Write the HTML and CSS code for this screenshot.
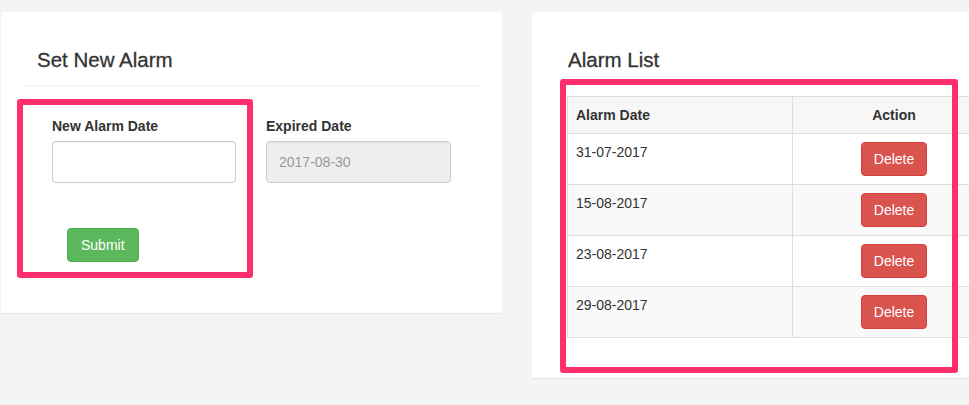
FILE: index.html
```html
<!DOCTYPE html>
<html>
<head>
<meta charset="utf-8">
<link rel="stylesheet" href="styles.css">
</head>
<body>
<div class="page">
  <div class="card card-left">
    <div class="card-header">
      <h3 class="card-title">Set New Alarm</h3>
    </div>
    <div class="card-body">
      <div class="form-row">
        <div class="form-col">
          <label class="label">New Alarm Date</label>
          <div class="input"></div>
        </div>
        <div class="form-col">
          <label class="label">Expired Date</label>
          <div class="input input-disabled">2017-08-30</div>
        </div>
      </div>
      <div class="submit-row">
        <button class="btn btn-success">Submit</button>
      </div>
    </div>
  </div>
  <div class="card card-right">
    <div class="card-header no-line">
      <h3 class="card-title">Alarm List</h3>
    </div>
    <div class="card-body">
      <table class="table">
        <thead>
          <tr><th class="col-date">Alarm Date</th><th class="col-action">Action</th></tr>
        </thead>
        <tbody>
          <tr><td>31-07-2017</td><td class="col-action"><button class="btn btn-danger">Delete</button></td></tr>
          <tr class="stripe"><td>15-08-2017</td><td class="col-action"><button class="btn btn-danger">Delete</button></td></tr>
          <tr><td>23-08-2017</td><td class="col-action"><button class="btn btn-danger">Delete</button></td></tr>
          <tr class="stripe"><td>29-08-2017</td><td class="col-action"><button class="btn btn-danger">Delete</button></td></tr>
        </tbody>
      </table>
    </div>
  </div>
</div>
<div class="highlight highlight-form"></div>
<div class="highlight highlight-list"></div>
</body>
</html>
```
FILE: styles.css
```css
html, body {
  margin: 0;
  padding: 0;
  overflow: hidden;
  background: #f4f4f4;
  font-family: "Liberation Sans", Arial, Helvetica, sans-serif;
  font-size: 14px;
  color: #333;
}
body {
  width: 969px;
  height: 405px;
  position: relative;
}
.page {
  display: flex;
  align-items: flex-start;
  gap: 30px;
  padding: 12px 0 0 1px;
  width: 1100px;
}
.card {
  background: #fff;
  width: 501px;
  flex: 0 0 501px;
  box-sizing: border-box;
  padding: 20px;
  border-radius: 3px;
  box-shadow: 0 1px 1px rgba(0,0,0,0.06);
}
.card-header {
  padding: 17px 15px 14px 16px;
  border-bottom: 1px solid #f2f2f2;
}
.card-header.no-line {
  border-bottom-color: transparent;
}
.card-title {
  margin: 0;
  font-size: 20.5px;
  font-weight: normal;
  line-height: 22px;
  color: #333;
  -webkit-text-stroke: 0.3px #333;
}
.card-body {
  padding: 0 15px;
}
.card-left .card-body {
  padding-top: 30px;
  padding-bottom: 31px;
}
.form-row {
  display: flex;
  margin-left: 1px;
}
.form-col {
  width: 214px;
  box-sizing: border-box;
  padding: 0 15px;
  display: flex;
  flex-direction: column;
}
.form-col + .form-col {
  width: 215px;
}
.label {
  display: block;
  font-weight: bold;
  font-size: 14px;
  line-height: 20px;
  margin-bottom: 5px;
}
.input {
  height: 42px;
  box-sizing: border-box;
  border: 1px solid #ccc;
  border-radius: 4px;
  background: #fff;
  padding: 10px 12px;
  line-height: 20px;
  font-size: 14px;
  color: #555;
  box-shadow: inset 0 1px 1px rgba(0,0,0,0.05);
}
.input-disabled {
  background: #eee;
  color: #999;
}
.submit-row {
  padding: 45px 0 0 31px;
}
.btn {
  font-family: inherit;
  font-size: 14px;
  line-height: 20px;
  padding: 6px 12px;
  border: 1px solid transparent;
  border-radius: 4px;
  color: #fff;
  cursor: pointer;
}
.btn-success {
  background: #5cb85c;
  border-color: #4cae4c;
  padding: 6px 13px;
}
.btn-danger {
  background: #d9534f;
  border-color: #d43f3a;
}
.card-right .card-body {
  padding-top: 10px;
  padding-bottom: 20px;
}
.table {
  width: 429px;
  border-collapse: collapse;
  margin-left: 0;
}
.table th, .table td {
  border: 1px solid #ddd;
  padding: 8px;
  line-height: 20px;
  vertical-align: top;
  text-align: left;
}
.table th {
  background: #f7f7f7;
  font-weight: bold;
}
.table td {
  background: #fff;
}
.table tr.stripe td {
  background: #f9f9f9;
}
.table .col-date {
  width: 208px;
}
.table .col-action {
  text-align: center;
}
.highlight {
  position: absolute;
  border: 6px solid #ff2f6e;
  border-radius: 3px;
  box-sizing: border-box;
}
.highlight-form {
  left: 17px;
  top: 99px;
  width: 236px;
  height: 179px;
}
.highlight-list {
  left: 560px;
  top: 79px;
  width: 398px;
  height: 294px;
}
```
